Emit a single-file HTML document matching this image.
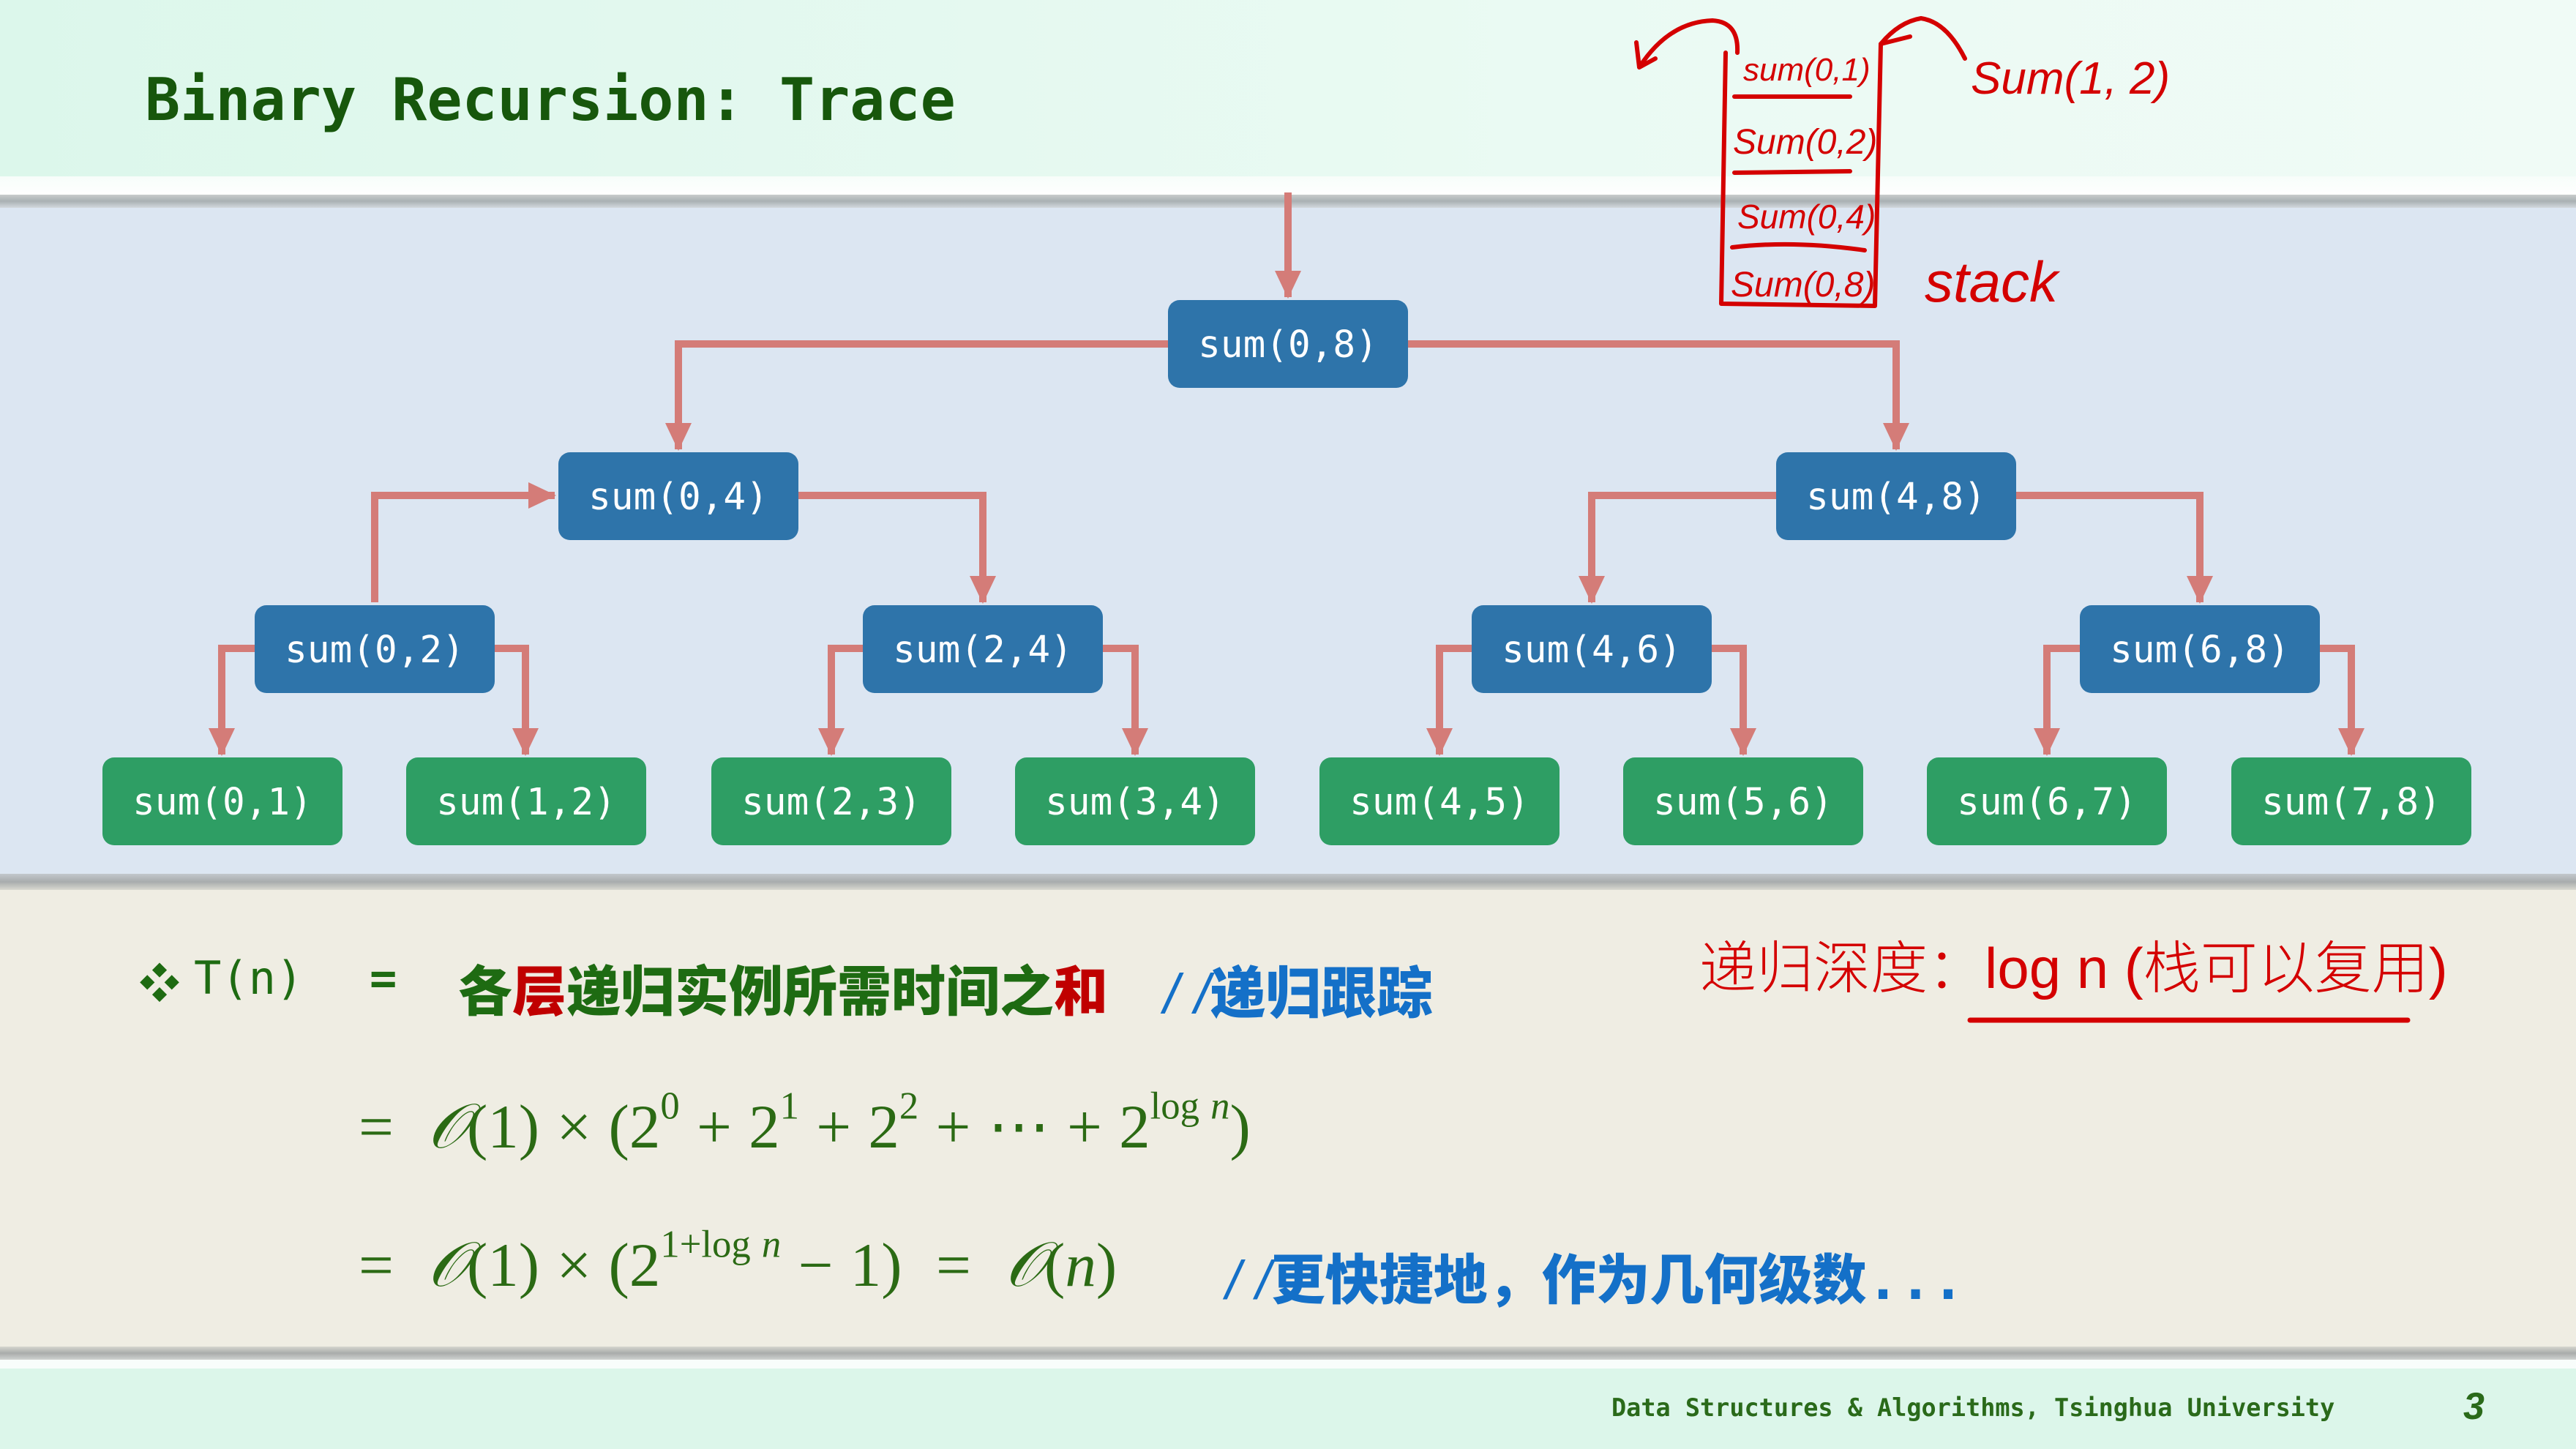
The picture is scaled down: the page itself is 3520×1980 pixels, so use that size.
<!DOCTYPE html>
<html><head><meta charset="utf-8"><style>
*{margin:0;padding:0}
body{width:3520px;height:1980px;position:relative;overflow:hidden;background:#efede3;font-family:"Liberation Sans","Noto Sans CJK SC",sans-serif}
.a{position:absolute;white-space:nowrap}
.mono{font-family:"DejaVu Sans Mono","Liberation Mono",monospace}
.m{font-family:"Liberation Serif","DejaVu Serif",serif;color:#2b6a14;font-size:85px;word-spacing:2px}
.cjk{font-family:"Noto Sans CJK SC",sans-serif;font-weight:900}
sup{font-size:0.62em;vertical-align:0.75em;line-height:0}
</style></head><body>
<div class="a" style="left:0;top:0;width:3520px;height:241px;background:linear-gradient(90deg,#dcf7eb,#eafaf3 60%,#f0fbf6)"></div>
<div class="a" style="left:0;top:241px;width:3520px;height:28px;background:linear-gradient(#f7fdfa,#ffffff)"></div>
<div class="a" style="left:0;top:266px;width:3520px;height:18px;background:linear-gradient(#c8cccc,#a9b0b3,#d2d8dd)"></div>
<div class="a" style="left:0;top:284px;width:3520px;height:910px;background:#dce6f2"></div>
<div class="a" style="left:0;top:1194px;width:3520px;height:22px;background:linear-gradient(#c2c7cc,#a8acad,#d8d8d0)"></div>
<div class="a" style="left:0;top:1840px;width:3520px;height:18px;background:linear-gradient(#d6d6cf,#a9acab,#cfd2d0)"></div>
<div class="a" style="left:0;top:1858px;width:3520px;height:12px;background:#f8fdfb"></div>
<div class="a" style="left:0;top:1870px;width:3520px;height:110px;background:#dcf6ea"></div>

<div class="a mono" style="left:198px;top:90px;font-size:80px;font-weight:bold;color:#17570c">Binary Recursion: Trace</div>

<svg class="a" style="left:0;top:0" width="3520" height="1980" viewBox="0 0 3520 1980">
<defs><marker id="ar" markerWidth="4" markerHeight="4" refX="3.6" refY="2" orient="auto" markerUnits="strokeWidth"><path d="M0,0.2 L3.8,2 L0,3.8 Z" fill="#d47c78"/></marker></defs>
<g fill="none" stroke="#d47c78" stroke-width="10" marker-end="url(#ar)">
<polyline points="1760,263 1760,406"/>
<polyline points="1596,470 927,470 927,614"/>
<polyline points="1924,470 2591,470 2591,614"/>
<polyline points="512,823 512,677 758,677"/>
<polyline points="1091,677 1343,677 1343,823"/>
<polyline points="2427,677 2175,677 2175,823"/>
<polyline points="2755,677 3006,677 3006,823"/>
<polyline points="348,886 303,886 303,1031"/><polyline points="676,886 718,886 718,1031"/>
<polyline points="1179,886 1136,886 1136,1031"/><polyline points="1507,886 1551,886 1551,1031"/>
<polyline points="2011,886 1967,886 1967,1031"/><polyline points="2339,886 2382,886 2382,1031"/>
<polyline points="2842,886 2797,886 2797,1031"/><polyline points="3170,886 3213,886 3213,1031"/>
</g>
<g font-family="DejaVu Sans Mono,Liberation Mono,monospace" font-size="51" fill="#fff" text-anchor="middle">
<rect x="1596" y="410" width="328" height="120" rx="16" fill="#2e74aa"/><text x="1760" y="488">sum(0,8)</text>
<rect x="763" y="618" width="328" height="120" rx="16" fill="#2e74aa"/><text x="927" y="696">sum(0,4)</text>
<rect x="2427" y="618" width="328" height="120" rx="16" fill="#2e74aa"/><text x="2591" y="696">sum(4,8)</text>
<rect x="348" y="827" width="328" height="120" rx="16" fill="#2e74aa"/><text x="512" y="905">sum(0,2)</text>
<rect x="1179" y="827" width="328" height="120" rx="16" fill="#2e74aa"/><text x="1343" y="905">sum(2,4)</text>
<rect x="2011" y="827" width="328" height="120" rx="16" fill="#2e74aa"/><text x="2175" y="905">sum(4,6)</text>
<rect x="2842" y="827" width="328" height="120" rx="16" fill="#2e74aa"/><text x="3006" y="905">sum(6,8)</text>
<g fill="#2e9e64">
<rect x="140" y="1035" width="328" height="120" rx="16"/><rect x="555" y="1035" width="328" height="120" rx="16"/>
<rect x="972" y="1035" width="328" height="120" rx="16"/><rect x="1387" y="1035" width="328" height="120" rx="16"/>
<rect x="1803" y="1035" width="328" height="120" rx="16"/><rect x="2218" y="1035" width="328" height="120" rx="16"/>
<rect x="2633" y="1035" width="328" height="120" rx="16"/><rect x="3049" y="1035" width="328" height="120" rx="16"/>
</g>
<text x="304" y="1113">sum(0,1)</text><text x="719" y="1113">sum(1,2)</text><text x="1136" y="1113">sum(2,3)</text><text x="1551" y="1113">sum(3,4)</text>
<text x="1967" y="1113">sum(4,5)</text><text x="2382" y="1113">sum(5,6)</text><text x="2797" y="1113">sum(6,7)</text><text x="3213" y="1113">sum(7,8)</text>
</g>
<g fill="none" stroke="#d40000" stroke-width="6" stroke-linecap="round" stroke-linejoin="round">
<path d="M2358,72 L2352,415 L2562,418 L2570,60"/>
<path d="M2370,132 L2528,132"/><path d="M2370,236 L2528,234"/><path d="M2367,338 Q2450,328 2548,342"/>
<path d="M2374,72 Q2376,30 2340,28 Q2280,30 2240,92 M2240,92 L2236,58 M2240,92 L2262,80"/>
<path d="M2685,80 Q2660,30 2625,25 Q2595,30 2570,60 M2570,60 L2610,50"/>
<path d="M2692,1394 L3290,1394" stroke-width="7"/>
</g>
<g fill="#d40000" font-family="Liberation Sans,sans-serif" font-style="italic">
<text x="2382" y="110" font-size="44">sum(0,1)</text>
<text x="2368" y="210" font-size="48">Sum(0,2)</text>
<text x="2374" y="312" font-size="46">Sum(0,4)</text>
<text x="2365" y="405" font-size="48">Sum(0,8)</text>
<text x="2693" y="128" font-size="62">Sum(1, 2)</text>
<text x="2630" y="412" font-size="78">stack</text>
</g>
<text x="2322" y="1350" font-size="78" fill="#d40000" font-family="Liberation Sans,Noto Sans CJK SC,sans-serif" font-weight="300">递归深度：log n (栈可以复用)</text>
</svg>

<div class="a" style="left:190px;top:1300px;font-size:56px;color:#1e6b12">❖</div>
<div class="a mono" style="left:265px;top:1300px;font-size:62px;color:#1e6b12">T(n)</div>
<div class="a mono" style="left:505px;top:1300px;font-size:62px;font-weight:bold;color:#1e6b12">=</div>
<div class="a cjk" style="left:626px;top:1296px;font-size:74px;color:#1e6b12">各<span style="color:#c00000">层</span>递归实例所需时间之<span style="color:#c00000">和</span></div>
<div class="a cjk" style="left:1590px;top:1296px;font-size:76px;color:#1470c8"><span style="font-family:'Liberation Sans';font-style:italic;font-weight:normal">/ /</span>递归跟踪</div>

<div class="a m" style="left:490px;top:1490px">= &nbsp;<i>𝒪</i>(1) × (2<sup>0</sup> + 2<sup>1</sup> + 2<sup>2</sup> + ⋯ + 2<sup>log <i>n</i></sup>)</div>
<div class="a m" style="left:490px;top:1680px">= &nbsp;<i>𝒪</i>(1) × (2<sup>1+log <i>n</i></sup> − 1) &nbsp;= &nbsp;<i>𝒪</i>(<i>n</i>)</div>
<div class="a cjk" style="left:1675px;top:1690px;font-size:74px;color:#1470c8"><span style="font-family:'Liberation Sans';font-style:italic;font-weight:normal">/ /</span>更快捷地，作为几何级数<span style="font-family:'DejaVu Sans Mono'">...</span></div>

<div class="a mono" style="left:2202px;top:1904px;font-size:33.5px;font-weight:bold;color:#2a6a1a">Data Structures &amp; Algorithms, Tsinghua University</div>
<div class="a" style="left:3366px;top:1892px;font-size:52px;font-style:italic;font-weight:bold;color:#2a6a1a">3</div>
</body></html>
